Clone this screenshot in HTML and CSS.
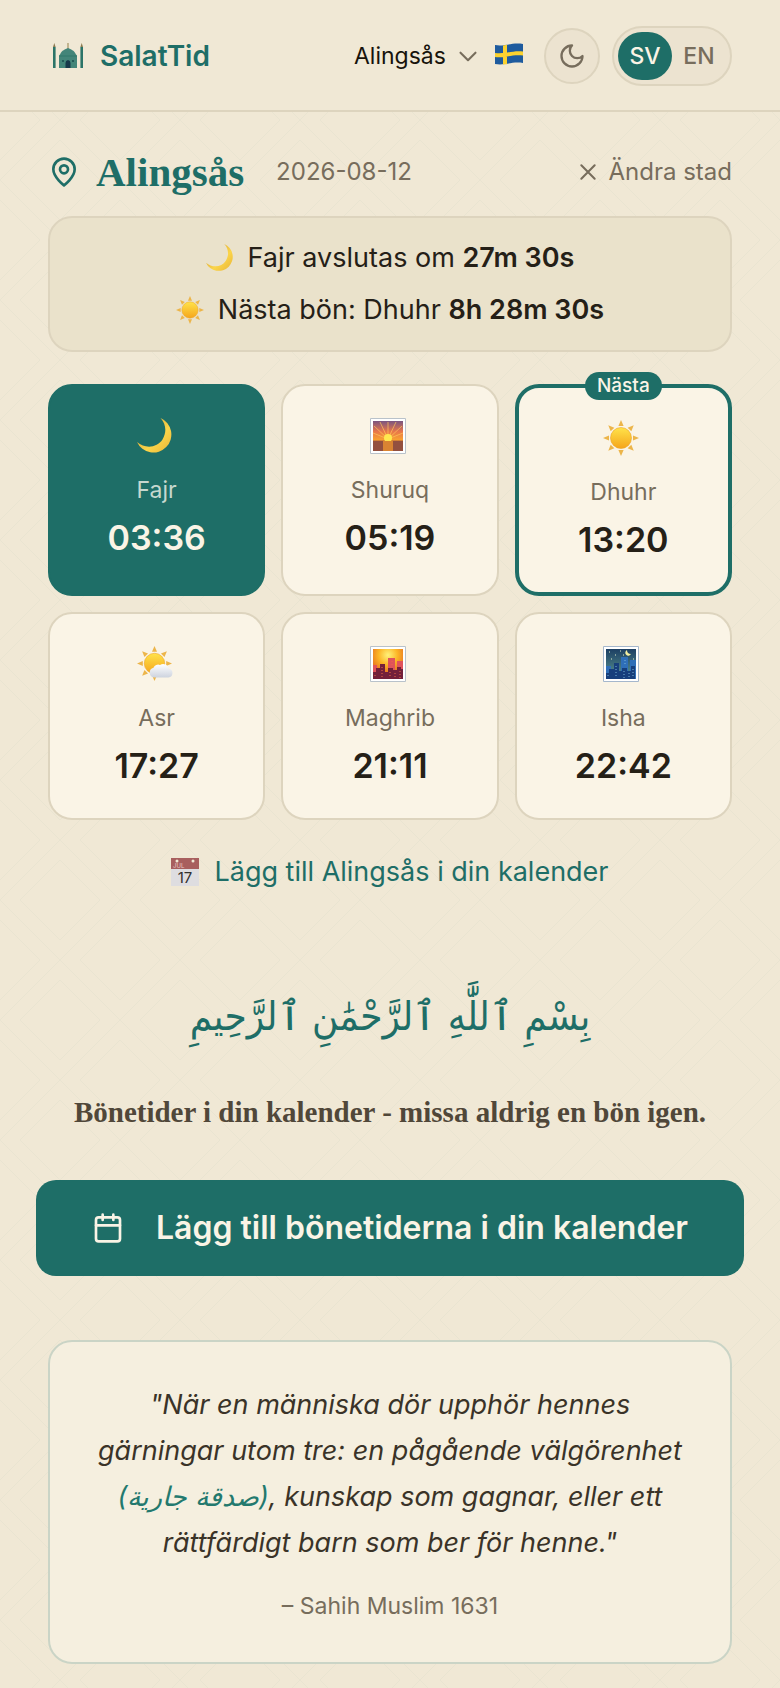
FILE: index.html
```html
<!DOCTYPE html>
<html lang="sv">
<head>
<meta charset="utf-8">
<meta name="viewport" content="width=device-width, initial-scale=1">
<title>SalatTid</title>
<link rel="stylesheet" href="styles.css">
</head>
<body>
<svg class="defs" aria-hidden="true">
  <defs>
    <linearGradient id="gold" x1="0" y1="0" x2="0" y2="1"><stop offset="0" stop-color="#ffe34a"/><stop offset="1" stop-color="#f5a51b"/></linearGradient>
    <linearGradient id="crescent" x1="0" y1="0" x2="1" y2="1"><stop offset="0" stop-color="#c98f2a"/><stop offset=".6" stop-color="#fbd54a"/><stop offset="1" stop-color="#e8b437"/></linearGradient>
    <linearGradient id="cloud" x1="0" y1="0" x2="0" y2="1"><stop offset="0" stop-color="#ffffff"/><stop offset="1" stop-color="#cdd3de"/></linearGradient>
    <linearGradient id="dawn" x1="0" y1="0" x2="0" y2="1"><stop offset="0" stop-color="#7a5580"/><stop offset=".35" stop-color="#e8764a"/><stop offset=".64" stop-color="#f9a32f"/><stop offset=".66" stop-color="#b0603c"/><stop offset="1" stop-color="#7a4340"/></linearGradient>
    <radialGradient id="glow" cx=".5" cy=".2" r=".8"><stop offset="0" stop-color="#fff27a"/><stop offset=".4" stop-color="#fcb526"/><stop offset="1" stop-color="#d9481f"/></radialGradient>
    <linearGradient id="night" x1="0" y1="0" x2="0" y2="1"><stop offset="0" stop-color="#1c3f63"/><stop offset="1" stop-color="#5d9a94"/></linearGradient>
    <symbol id="e-moon" viewBox="0 0 36 36"><path d="M23.500 0A18 18 0 1 1 0 24C8 31 20 30 25.500 21.500C30 14 29 6 23.500 0Z" fill="url(#crescent)"/></symbol>
    <symbol id="e-sun" viewBox="0 0 36 36">
      <g fill="#ecb54a"><path id="ray" d="M18 0l2.600 6h-5.200z"/><use href="#ray" transform="rotate(45 18 18)"/><use href="#ray" transform="rotate(90 18 18)"/><use href="#ray" transform="rotate(135 18 18)"/><use href="#ray" transform="rotate(180 18 18)"/><use href="#ray" transform="rotate(225 18 18)"/><use href="#ray" transform="rotate(270 18 18)"/><use href="#ray" transform="rotate(315 18 18)"/></g>
      <circle cx="18" cy="18" r="10.500" fill="url(#gold)" stroke="#eda42a" stroke-width=".6"/>
    </symbol>
    <symbol id="e-cloudsun" viewBox="0 0 36 36">
      <use href="#e-sun" width="35" height="35"/>
      <path d="M17 31.500a5 5 0 0 1-.5-9.800a5 5 0 0 1 6.500-2.700a6 6 0 0 1 9 3.500a4.600 4.600 0 0 1-.5 9z" fill="url(#cloud)"/>
    </symbol>
    <symbol id="e-sunrise" viewBox="0 0 36 36">
      <path d="M.5.5h35v35H.5z" fill="#fff" stroke="#b9c2ca"/><path d="M3 3h30v30H3z" fill="url(#dawn)"/>
      <g stroke="#ffc65a" stroke-width="1" opacity=".7"><path d="M18 21L4 8M18 21L10 4M18 21V4M18 21l8-17M18 21L32 8M18 21L3 15M18 21l15-6"/></g>
      <circle cx="18" cy="20" r="4" fill="#ffe84f"/><path d="M3 23h30v10H3z" fill="#93503f"/><path d="M13 23h10v10H13z" fill="#d98432"/>
    </symbol>
    <symbol id="e-dusk" viewBox="0 0 36 36">
      <path d="M.5.5h35v35H.5z" fill="#fff" stroke="#b9c2ca"/><path d="M3 3h30v30H3z" fill="url(#glow)"/>
      <path d="M18 12h7v21h-7zM27 15h6v18h-6zM3 19h4v14H3z" fill="#e0535a"/>
      <path d="M3 26h3v-4h4v-4h5v8h3v-4h5v2h4v-3h4v2h2v10H3z" fill="#74203a"/>
      <path d="M12 21v10M5 29v3M20 26v6M25 27v4M30 25v7M22 15v5" stroke="#ef6b45" stroke-dasharray="1 2"/>
    </symbol>
    <symbol id="e-night" viewBox="0 0 36 36">
      <path d="M.5.5h35v35H.5z" fill="#fff" stroke="#a5b7cc"/><path d="M3 3h30v30H3z" fill="url(#night)"/>
      <path d="M24 4a3 3 0 1 0 4 4a4 4 0 0 1-4-4z" fill="#f5f0a0"/>
      <path d="M6 6h1M12 9h1M17 5h1M8 13h1M30 13h1M20 9h1" stroke="#e5f0c8" stroke-width="1.200"/>
      <path d="M18 11h7v22h-7zM27 14h6v19h-6zM3 20h5v13H3z" fill="#2f6fb8"/>
      <path d="M3 27h3v-4h5v-6h5v8h3v-3h5v3h4v-5h4v13H3z" fill="#173f7c"/>
      <path d="M13 20v11M5 29v3M21 25v7M26 27v4M30 23v9M22 14v6" stroke="#78b5d8" stroke-dasharray="1 2"/>
    </symbol>
  </defs>
</svg>

<header class="topbar">
  <a class="brand" href="#">
    <svg class="brand-logo" viewBox="0 0 32 32" aria-hidden="true">
      <path d="M1 7h2.600v21H1zM28.400 7H31v21h-2.600z" fill="#2c7468"/>
      <path d="M2.300 3l1.300 4H1zM29.700 3L31 7h-2.600z" fill="#8c7a50"/>
      <path d="M16 3v6" stroke="#a39262" stroke-width="1.200"/>
      <path d="M7 28V16q0-1 1-1.500C10 10 13 9.500 16 8c3 1.500 6 2 8 6.500q1 .5 1 1.500v12z" fill="#438579"/>
      <path d="M7 16h18" stroke="#2c7468" stroke-width=".8"/>
      <path d="M13.500 28v-5q0-2.500 2.500-3 2.500.5 2.500 3v5z" fill="#17384a"/>
      <path d="M10 20h2v2h-2zM20 20h2v2h-2z" fill="#235a58"/>
    </svg>
    <span>SalatTid</span>
  </a>
  <div class="controls">
    <label class="city">
      <select class="city-select" aria-label="Stad"><option>Alingsås</option></select>
      <svg class="icon-sm" viewBox="0 0 24 24" aria-hidden="true"><path d="M3 8l9 9 9-9"/></svg>
    </label>
    <svg class="flag" viewBox="0 0 30 22" role="img" aria-label="Sverige">
      <path d="M1 2C10 4 18-1 29 1V20C18 18 11 23 1 21Z" fill="#1e5b9e"/>
      <path d="M9 2.500l4-.7v19.400l-4 .4zM1 10c10 1.500 18-3 28-1.500v4C18 11 10 15.500 1 14z" fill="#fbd22f"/>
    </svg>
    <button class="theme" type="button" aria-label="Mörkt läge">
      <svg class="icon" viewBox="0 0 24 24" aria-hidden="true"><path d="M12 3a6 6 0 0 0 9 9 9 9 0 1 1-9-9Z"/></svg>
    </button>
    <div class="lang" role="group" aria-label="Språk">
      <button class="lang-btn lang-btn-on" type="button" aria-pressed="true">SV</button>
      <button class="lang-btn" type="button" aria-pressed="false">EN</button>
    </div>
  </div>
</header>

<main class="page">
  <div class="heading">
    <svg class="icon-lg" viewBox="0 0 24 24" aria-hidden="true"><path d="M20 10c0 6-8 12-8 12s-8-6-8-12a8 8 0 0 1 16 0Z"/><circle cx="12" cy="10" r="3"/></svg>
    <h1 class="title">Alingsås</h1>
    <time class="date" datetime="2026-08-12">2026-08-12</time>
    <button class="change" type="button">
      <svg class="icon-sm" viewBox="0 0 24 24" aria-hidden="true"><path d="M4 4l16 16M20 4L4 20"/></svg>
      <span>Ändra stad</span>
    </button>
  </div>

  <section class="status">
    <p class="status-line"><svg class="emoji-sm" aria-hidden="true"><use href="#e-moon"/></svg><span>Fajr avslutas om <b>27m 30s</b></span></p>
    <p class="status-line"><svg class="emoji-sm" aria-hidden="true"><use href="#e-sun"/></svg><span>Nästa bön: Dhuhr <b>8h 28m 30s</b></span></p>
  </section>

  <section class="times">
    <article class="card card-now"><svg class="emoji" aria-hidden="true"><use href="#e-moon"/></svg><h2 class="name">Fajr</h2><p class="clock">03:36</p></article>
    <article class="card"><svg class="emoji" aria-hidden="true"><use href="#e-sunrise"/></svg><h2 class="name">Shuruq</h2><p class="clock">05:19</p></article>
    <article class="card card-next"><span class="badge">Nästa</span><svg class="emoji" aria-hidden="true"><use href="#e-sun"/></svg><h2 class="name">Dhuhr</h2><p class="clock">13:20</p></article>
    <article class="card"><svg class="emoji" aria-hidden="true"><use href="#e-cloudsun"/></svg><h2 class="name">Asr</h2><p class="clock">17:27</p></article>
    <article class="card"><svg class="emoji" aria-hidden="true"><use href="#e-dusk"/></svg><h2 class="name">Maghrib</h2><p class="clock">21:11</p></article>
    <article class="card"><svg class="emoji" aria-hidden="true"><use href="#e-night"/></svg><h2 class="name">Isha</h2><p class="clock">22:42</p></article>
  </section>

  <a class="cal-link" href="#">
    <svg class="emoji-sm" viewBox="0 0 28 28" aria-hidden="true">
      <path d="M0 0h28v28H0z" fill="#dedde0"/><path d="M0 0h28v11H0z" fill="#a85f5e"/>
      <circle cx="6" cy="3" r="1.500" fill="#f0e8d5"/><circle cx="22" cy="3" r="1.500" fill="#f0e8d5"/>
      <text class="cal-month" x="2" y="10">JUL</text><text class="cal-day" x="14" y="25">17</text>
    </svg>
    <span>Lägg till Alingsås i din kalender</span>
  </a>

  <p class="basmala" lang="ar" dir="rtl">بِسْمِ ٱللَّٰهِ ٱلرَّحْمَٰنِ ٱلرَّحِيمِ</p>
  <p class="tagline">Bönetider i din kalender - missa aldrig en bön igen.</p>

  <a class="cta" href="#">
    <svg class="icon-lg" viewBox="0 0 24 24" aria-hidden="true"><path d="M8 2v4M16 2v4M3 10h18"/><rect x="3" y="4" width="18" height="18" rx="2"/></svg>
    <span>Lägg till bönetiderna i din kalender</span>
  </a>

  <figure class="hadith">
    <blockquote class="quote">"När en människa dör upphör hennes gärningar utom tre: en pågående välgörenhet <bdi class="quote-ar" lang="ar" dir="rtl">(صدقة جارية)</bdi>, kunskap som gagnar, eller ett rättfärdigt barn som ber för henne."</blockquote>
    <figcaption class="source">– Sahih Muslim 1631</figcaption>
  </figure>
</main>
</body>
</html>
```

FILE: styles.css
```css
:root {
  --bg: #f0e8d5;
  --line: #ddd4be;
  --teal: #1e6e67;
  --ink: #252017;
  --muted: #776d5c;
  --card: #faf4e6;
}

* { box-sizing: border-box; }

body {
  margin: 0;
  background: var(--bg) url("data:image/svg+xml,%3Csvg xmlns='http://www.w3.org/2000/svg' width='120' height='120'%3E%3Cg fill='none' stroke='%231e6e67' stroke-opacity='.035'%3E%3Cpath d='M60 0L120 60L60 120L0 60Z M60 20L100 60L60 100L20 60Z M0 40L40 0M80 0L120 40M0 80L40 120M80 120L120 80'/%3E%3C/g%3E%3C/svg%3E");
  color: var(--ink);
  font-family: Inter, "DejaVu Sans", sans-serif;
  font-size: 24px;
  line-height: 36px;
}

h1, h2, p, figure, blockquote { margin: 0; }
a { color: inherit; text-decoration: none; }
button, select { font: inherit; color: inherit; border: 0; background: none; padding: 0; cursor: pointer; }

svg { flex: none; display: block; }
.defs { position: absolute; width: 0; height: 0; }
.icon-sm, .icon, .icon-lg {
  fill: none;
  stroke: currentColor;
  stroke-width: 2;
  stroke-linecap: round;
  stroke-linejoin: round;
}
.icon-sm { width: 20px; height: 20px; stroke-width: 2.5; }
.icon { width: 28px; height: 28px; }
.icon-lg { width: 32px; height: 32px; }
.emoji-sm { width: 28px; height: 28px; }
.emoji { width: 36px; height: 36px; margin-right: 4px; }

.topbar {
  display: flex;
  align-items: center;
  justify-content: space-between;
  padding: 26px 48px 24px;
  background: var(--bg);
  border-bottom: 2px solid var(--line);
}
.brand {
  display: flex;
  align-items: center;
  gap: 16px;
  padding-left: 4px;
  color: var(--teal);
  font-size: 28px;
  font-weight: 600;
}
.brand-logo { width: 32px; height: 32px; }
.controls { display: flex; align-items: center; gap: 12px; }
.city { display: flex; align-items: center; color: var(--muted); gap: 12px; }
.city-select { appearance: none; color: #17130c; font-size: 23px; }
.flag { width: 30px; height: 22px; margin: 0 8px 4px 4px; }
.theme {
  display: grid;
  place-items: center;
  width: 56px;
  height: 56px;
  border: 2px solid var(--line);
  border-radius: 50%;
  background: #ece3d0;
  color: var(--muted);
}
.lang {
  display: flex;
  padding: 4px;
  border: 2px solid var(--line);
  border-radius: 30px;
  background: #ece3d0;
  color: var(--muted);
}
.lang-btn { width: 54px; height: 48px; border-radius: 24px; font-size: 23px; font-weight: 500; }
.lang-btn-on { background: var(--teal); color: #faf4e6; }

.page { display: flex; flex-direction: column; padding: 36px 48px 24px; }

.heading { display: flex; align-items: center; height: 48px; color: var(--teal); }
.title {
  margin: 0 32px 0 16px;
  font-family: "Liberation Serif", serif;
  font-size: 41px;
  line-height: 48px;
  font-weight: 700;
}
.date { color: var(--muted); }
.change { display: flex; align-items: center; gap: 10px; margin-left: auto; color: var(--muted); }

.status {
  display: grid;
  gap: 8px;
  margin-top: 20px;
  padding: 18px 24px;
  border: 2px solid var(--line);
  border-radius: 24px;
  background: #eae2cb;
}
.status-line {
  display: flex;
  align-items: center;
  justify-content: center;
  gap: 14px;
  font-size: 27px;
  line-height: 44px;
}
.status-line b { font-weight: 600; }

.times { display: grid; grid-template-columns: repeat(3, 1fr); gap: 16px; margin-top: 32px; }
.card {
  position: relative;
  display: flex;
  flex-direction: column;
  align-items: center;
  padding: 32px 8px 28px;
  border: 2px solid var(--line);
  border-radius: 24px;
  background: var(--card);
}
.name { margin-top: 18px; color: var(--muted); font-size: 23px; line-height: 36px; font-weight: 400; }
.clock { margin-top: 6px; font-size: 34px; line-height: 48px; font-weight: 600; }
.card-now { border-color: var(--teal); background: var(--teal); color: #faf4e6; }
.card-now .name { color: #c6d8cf; }
.card-next { border: 4px solid var(--teal); }
.badge {
  position: absolute;
  top: -16px;
  padding: 0 12px;
  border-radius: 14px;
  background: var(--teal);
  color: #faf4e6;
  font-size: 19px;
  line-height: 28px;
  font-weight: 500;
}

.cal-link {
  display: flex;
  align-items: center;
  align-self: center;
  gap: 15px;
  margin-top: 32px;
  color: var(--teal);
  font-size: 27px;
  line-height: 40px;
}
.cal-month { font-size: 6px; fill: #e8c8c4; }
.cal-day { font-size: 15px; fill: #33302e; text-anchor: middle; }

.basmala {
  margin-top: 80px;
  color: var(--teal);
  font-family: "DejaVu Sans Condensed", "DejaVu Sans", sans-serif;
  font-size: 40px;
  line-height: 88px;
  text-align: center;
}
.tagline {
  margin-top: 32px;
  color: #504739;
  font-family: "Liberation Serif", serif;
  font-size: 29px;
  line-height: 40px;
  font-weight: 700;
  text-align: center;
}
.cta {
  display: flex;
  align-items: center;
  justify-content: center;
  gap: 32px;
  margin: 48px -12px 0;
  padding: 24px;
  border-radius: 20px;
  background: var(--teal);
  color: #faf4e6;
  font-size: 32px;
  line-height: 48px;
  font-weight: 600;
}

.hadith {
  margin-top: 64px;
  padding: 40px 44px 38px;
  border: 2px solid #cad4c6;
  border-radius: 24px;
  background: #f5efdf;
  text-align: center;
}
.quote { color: #3a3328; font-size: 27px; line-height: 46px; font-style: italic; }
.quote-ar { color: #23796e; white-space: nowrap; }
.source { margin-top: 22px; color: var(--muted); font-size: 23px; line-height: 36px; }
```
